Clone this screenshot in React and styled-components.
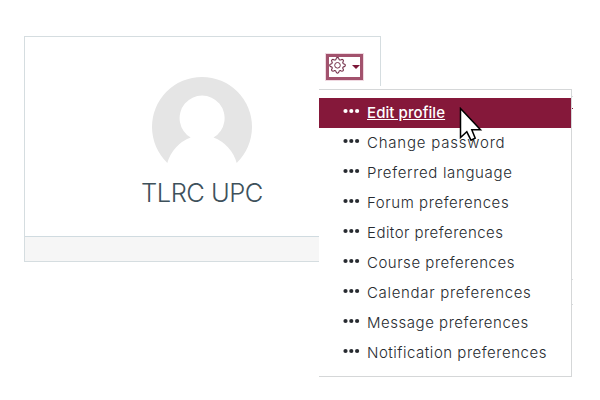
import React from "react";
import styled, { createGlobalStyle } from "styled-components";

const items = [
  { label: "Edit profile", spacing: 0.08, active: true },
  { label: "Change password", spacing: 0.78 },
  { label: "Preferred language", spacing: 0.65 },
  { label: "Forum preferences", spacing: 0.57 },
  { label: "Editor preferences", spacing: 0.46 },
  { label: "Course preferences", spacing: 0.52 },
  { label: "Calendar preferences", spacing: 0.68 },
  { label: "Message preferences", spacing: 0.53 },
  { label: "Notification preferences", spacing: 0.52 },
];

// outline of the cog: eight teeth with rounded flanks
const gearPath = () => {
  const pts = [];
  for (let i = 0; i <= 96; i++) {
    const a = (i / 96) * Math.PI * 2;
    const r = 6.8 + 1.1 * Math.tanh(1.4 * Math.cos(8 * a));
    pts.push(`${(8.5 + r * Math.sin(a)).toFixed(2)} ${(8.3 - r * Math.cos(a)).toFixed(2)}`);
  }
  return `M${pts.join("L")}Z`;
};

const GearIcon = () => (
  <svg width="17" height="17" fill="none" stroke="#74304a">
    <path d={gearPath()} strokeWidth="1.1" />
    <circle cx="8.5" cy="8.3" r="2.8" strokeWidth="1" />
  </svg>
);

const Avatar = () => (
  <svg width="100" height="100" viewBox="0 0 100 100">
    <path
      d="M15.3 86A50 50 0 1 1 84.7 86A38 38 0 0 0 61.5 60.5A22.5 22.5 0 1 0 38.7 60.5A38 38 0 0 0 15.3 86Z"
      fill="#e5e5e5"
    />
  </svg>
);

const Dots = () => (
  <svg width="18" height="6" fill="currentColor">
    <circle cx="2.5" cy="3" r="2.1" />
    <circle cx="8.3" cy="3" r="2.1" />
    <circle cx="14.1" cy="3" r="2.1" />
  </svg>
);

const App = () => (
  <Page>
    <GlobalStyle />
    <Card>
      <CardBody>
        <Avatar />
        <Name>TLRC UPC</Name>
      </CardBody>
      <CardFooter />
      <SettingsButton>
        <GearIcon />
        <Caret />
      </SettingsButton>
    </Card>
    <MenuLayer>
      <Menu>
        {items.map(({ label, active, spacing }) => (
          <Item key={label} $active={active}>
            <Dots />
            <Label $active={active} $spacing={spacing}>
              {label}
            </Label>
          </Item>
        ))}
      </Menu>
    </MenuLayer>
    <Edge $top={96} />
    <Edge $top={108} $color="#85183a" />
    <Edge $top={279} />
    <Edge $top={304} />
    <Pointer width="24" height="36">
      <path
        d="M1.5 1.5V30.5L7.8 24.8L12 33.2L16.2 31.2L12.8 22.8H21.5Z"
        fill="#fff"
        stroke="#000"
        strokeWidth="1.5"
      />
    </Pointer>
  </Page>
);

export default App;

const GlobalStyle = createGlobalStyle`
  body {
    margin: 0;
    background: #fff;
  }
`;

const Page = styled.div`
  position: relative;
  box-sizing: border-box;
  width: 600px;
  height: 400px;
  padding: 36px 0 0 24px;
  overflow: hidden;
  background: #fff;
  font-family: Inter, "Open Sans", sans-serif;
`;

const Card = styled.section`
  position: relative;
  box-sizing: border-box;
  width: 357px;
  height: 226px;
  display: flex;
  flex-direction: column;
  border: 1px solid #d5dde0;
`;

const CardBody = styled.div`
  flex: 1;
  display: flex;
  flex-direction: column;
  align-items: center;
  padding: 40px 1px 0 0;
`;

const Name = styled.h2`
  margin: 0;
  line-height: 32px;
  font-size: 25.5px;
  font-weight: 300;
  letter-spacing: -0.5px;
  color: #3e515b;
  white-space: nowrap;
`;

const CardFooter = styled.div`
  height: 24px;
  border-top: 1px solid #d0dbe0;
  background: #f6f6f6;
`;

const SettingsButton = styled.div`
  position: absolute;
  top: 17px;
  left: 301px;
  box-sizing: border-box;
  width: 37px;
  height: 26px;
  display: flex;
  align-items: center;
  justify-content: space-between;
  padding: 0 0 3px;
  border: 3px solid #a2526d;
  background: #fff;
  box-shadow: 0 0 0 1px #f0d9e1;
`;

const Caret = styled.span`
  margin-top: 3px;
  border-top: 4px solid #7d1738;
  border-left: 4px solid transparent;
  border-right: 4px solid transparent;
`;

const MenuLayer = styled.div`
  position: absolute;
  top: 86px;
  left: 319px;
  width: 253px;
  padding-top: 3px;
  background: #fff;
`;

const Menu = styled.ul`
  box-sizing: border-box;
  height: 288px;
  margin: 0;
  padding: 8px 0;
  list-style: none;
  border: 1px solid #d5d7d8;
  border-left: 0;
`;

const Item = styled.li`
  height: 30px;
  display: flex;
  align-items: center;
  gap: 6px;
  padding-left: 24px;
  color: ${(p) => (p.$active ? "#fff" : "#272b30")};
  background: ${(p) => (p.$active ? "#85183a" : "transparent")};

  & > svg {
    flex: none;
    margin-top: -4px;
  }
`;

const Label = styled.span`
  line-height: 30px;
  font-size: 15px;
  font-weight: ${(p) => (p.$active ? 500 : 300)};
  letter-spacing: ${(p) => p.$spacing}px;
  text-decoration: ${(p) => (p.$active ? "underline" : "none")};
  text-underline-offset: 1px;
  white-space: nowrap;
`;

const Edge = styled.span`
  position: absolute;
  top: ${(p) => p.$top}px;
  left: 572px;
  width: 1px;
  height: 1px;
  background: ${(p) => p.$color || "#d9dcde"};
`;

const Pointer = styled.svg`
  position: absolute;
  top: 107px;
  left: 459px;
`;
